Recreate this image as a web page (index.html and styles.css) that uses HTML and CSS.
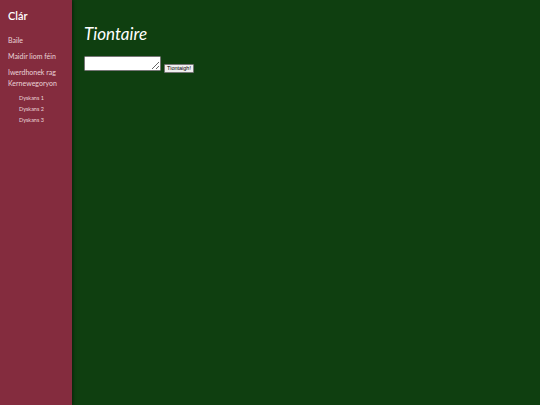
FILE: index.html
```
<!DOCTYPE html>
<html lang="ga">
<head>
<meta charset="utf-8">
<title>Tiontaire</title>
<link rel="stylesheet" href="styles.css">
</head>
<body>
<div class="layout">
  <nav class="sidebar">
    <div class="brand">Clár</div>
    <ul class="menu">
      <li><a href="#">Baile</a></li>
      <li><a href="#">Maidir liom féin</a></li>
      <li><a href="#">Iwerdhonek rag Kernewegoryon</a>
        <ul class="submenu">
          <li><a href="#">Dyskans 1</a></li>
          <li><a href="#">Dyskans 2</a></li>
          <li><a href="#">Dyskans 3</a></li>
        </ul>
      </li>
    </ul>
  </nav>
  <main class="content">
    <h1 class="title">Tiontaire</h1>
    <form class="form">
      <textarea class="input"></textarea>
      <button type="button" class="btn">Tiontaigh!</button>
    </form>
  </main>
</div>
</body>
</html>
```
FILE: styles.css
```
html, body {
  margin: 0;
  padding: 0;
  height: 100%;
}
body {
  font-family: Lato, "Open Sans", sans-serif;
  background: #0f3f10;
  color: #fff;
}
.layout {
  display: flex;
  min-height: 405px;
}
.sidebar {
  width: 72px;
  flex: none;
  background: #842c3e;
  box-shadow: 1px 0 3px rgba(0,0,0,0.5);
  padding: 9px 0 0 8px;
  box-sizing: border-box;
}
.brand {
  font-size: 11px;
  font-weight: 600;
  line-height: 14px;
  margin-bottom: 12px;
}
.menu, .submenu {
  list-style: none;
  margin: 0;
  padding: 0;
}
.menu > li {
  margin-bottom: 5px;
}
.menu a {
  color: #ead3d8;
  text-decoration: none;
  font-size: 7px;
  line-height: 11px;
  display: block;
}
.submenu {
  padding-left: 11px;
  padding-top: 4px;
}
.submenu li {
  margin-bottom: 0;
}
.submenu a {
  font-size: 5.5px;
  line-height: 11px;
}
.content {
  flex: 1;
  padding: 20px 12px;
}
.title {
  font-style: italic;
  font-weight: 400;
  font-size: 17px;
  line-height: 24px;
  margin: 2px 0 10px;
}
.form {
  display: flex;
  align-items: flex-end;
  gap: 3px;
}
.input {
  width: 77px;
  height: 15px;
  box-sizing: border-box;
  margin: 0;
  border: 1px solid #767676;
  border-radius: 1px;
  padding: 1px;
  background: #fff;
  resize: both;
}
.btn {
  font-family: Arial, "Liberation Sans", sans-serif;
  font-size: 5.5px;
  height: 9px;
  line-height: 7px;
  padding: 0 2px;
  margin: 0 0 -2px;
  border: 1px solid #767676;
  border-radius: 1px;
  background: #efefef;
  color: #000;
}
```
